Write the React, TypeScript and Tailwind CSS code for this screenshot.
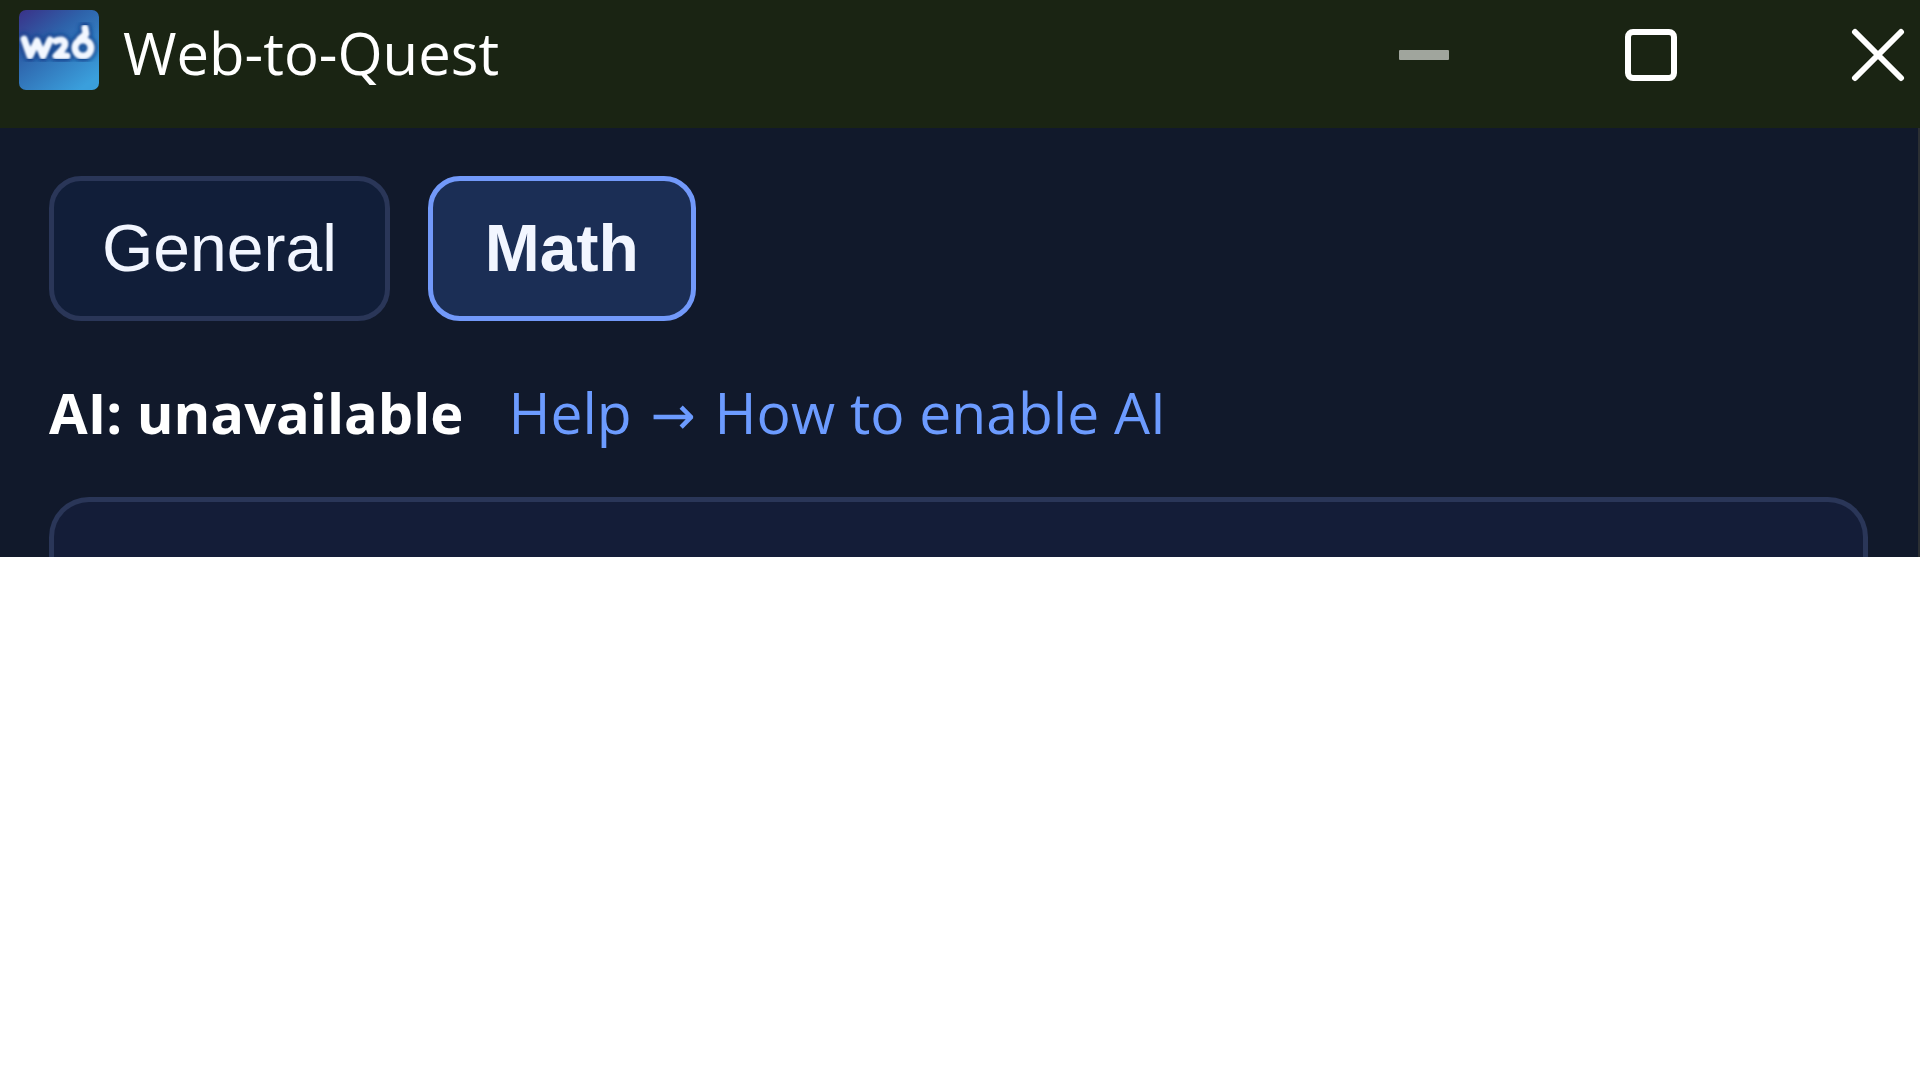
function AppLogo() {
  return (
    <svg viewBox="0 0 80 80" className="size-20 shrink-0" aria-hidden="true">
      <defs>
        <linearGradient id="logo-bg" x1="0" y1="0" x2="0.75" y2="1">
          <stop offset="0" stopColor="#3a3188" />
          <stop offset="0.4" stopColor="#2e62aa" />
          <stop offset="1" stopColor="#3a9fdc" />
        </linearGradient>
        <filter id="logo-glow" x="-20%" y="-20%" width="140%" height="140%">
          <feGaussianBlur stdDeviation="2" />
        </filter>
        <filter id="logo-soft" x="-10%" y="-10%" width="120%" height="120%">
          <feGaussianBlur stdDeviation="1.2" />
        </filter>
        <g id="logo-mark" fill="none" strokeLinejoin="round" strokeLinecap="round">
          <path d="M5 29 L11 46 L18 31 L24 46 L31 30" />
          <path d="M37 31 Q44 28 46 33 Q47 37 37 46 H48" />
          <circle cx="64" cy="38" r="8" />
          <path d="M61 29 L67 24 L66 18" />
        </g>
      </defs>
      <rect width="80" height="80" rx="7" fill="url(#logo-bg)" />
      <use href="#logo-mark" stroke="#103a86" strokeWidth="12" opacity="0.75" filter="url(#logo-glow)" />
      <use href="#logo-mark" stroke="#f2f7ff" strokeWidth="7" filter="url(#logo-soft)" />
    </svg>
  );
}

function TitleBar() {
  return (
    <header className="flex h-32 items-start bg-[#1a2413] pl-[19px] pt-2.5">
      <AppLogo />
      <h1 className="ml-6 font-['Open_Sans','Noto_Sans',sans-serif] text-[58px] leading-[86px] text-white">
        Web-to-Quest
      </h1>
      <div className="ml-auto mr-[15px] mt-[18px] flex gap-[173px]">
        <button type="button" aria-label="Minimize" className="size-[54px]">
          <svg viewBox="0 0 54 54" className="size-full">
            <rect x="2" y="22" width="50" height="10" rx="1" fill="#a0a59d" />
          </svg>
        </button>
        <button type="button" aria-label="Maximize" className="size-[54px]">
          <svg viewBox="0 0 54 54" className="size-full">
            <rect x="4" y="4" width="46" height="46" rx="5" fill="none" stroke="#fff" strokeWidth="6" />
          </svg>
        </button>
        <button type="button" aria-label="Close" className="size-[54px]">
          <svg viewBox="0 0 54 54" className="size-full">
            <path d="M4 4 L50 50 M50 4 L4 50" stroke="#fff" strokeWidth="6" strokeLinecap="round" />
          </svg>
        </button>
      </div>
    </header>
  );
}

export default function App() {
  return (
    <div className="min-h-screen bg-white">
      <TitleBar />
      <main className="border-r-2 border-[#2b2f33] bg-[#11192b] pl-[49px] pr-[50px] pt-12">
        <nav className="flex gap-[38px] font-['Liberation_Sans',sans-serif] text-[66px] leading-[79px] text-[#f2f6ff]">
          <button type="button" className="rounded-[32px] border-5 border-[#2a3658] bg-[#111e39] px-12 py-7">
            General
          </button>
          <button type="button" className="rounded-[32px] border-5 border-[#7299fa] bg-[#1b2e55] px-[52px] py-7 font-bold">
            Math
          </button>
        </nav>
        <p className="mt-[51px] flex items-center gap-[45px] font-['Open_Sans','Noto_Sans',sans-serif] text-[56px] leading-20">
          <strong className="font-bold text-white">AI: unavailable</strong>
          <a href="#help" className="text-[57px] text-[#6c9bff]">
            Help <span className="mx-1 font-['DejaVu_Sans',sans-serif] text-[54px] leading-none">→</span> How to enable AI
          </a>
        </p>
        <section aria-label="Content" className="mt-[45px] h-15 rounded-t-[40px] border-x-5 border-t-5 border-[#2a3658] bg-[#141d38]" />
      </main>
    </div>
  );
}
